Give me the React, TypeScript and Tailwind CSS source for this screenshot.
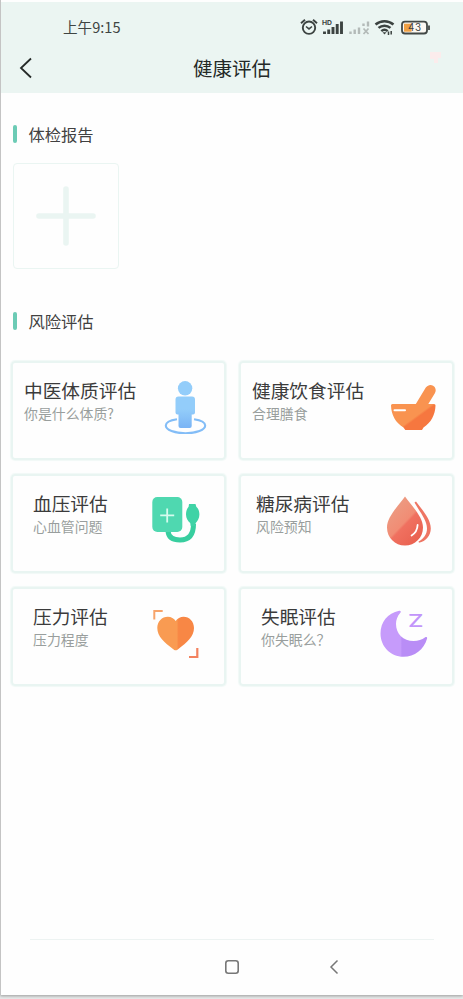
import type { ReactNode } from "react";

function PersonIcon() {
  return (
    <svg width="64" height="64" viewBox="0 0 64 64" fill="none">
      <defs>
        <linearGradient id="person" x1="0" y1="0" x2="0" y2="1">
          <stop offset="0.4" stopColor="#93cdfa" />
          <stop offset="1" stopColor="#7ab4f5" />
        </linearGradient>
      </defs>
      <path
        d="M28 49.2C21 50.2 16.8 52.6 16.8 55.6c0 4.4 8.8 7.700 19.7 7.700s19.7-3.300 19.7-7.700c0-3-4.200-5.400-11.200-6.400"
        stroke="#83bdf7"
        strokeWidth="2.1"
      />
      <circle cx="36.1" cy="18.3" r="7.2" fill="#93cdfa" />
      <path
        d="M29.500 26.500h13.500a3 3 0 0 1 3 3V42.500a2 2 0 0 1-2 2h-1.300v11.500a2 2 0 0 1-2 2h-9.200a2 2 0 0 1-2-2V44.500H28.500a2 2 0 0 1-2-2V29.500a3 3 0 0 1 3-3z"
        fill="url(#person)"
      />
    </svg>
  );
}

function BowlIcon() {
  return (
    <svg width="64" height="64" viewBox="0 0 64 64" fill="none">
      <defs>
        <linearGradient id="bowl" x1="0" y1="0" x2="1" y2="0.8">
          <stop offset="0.57" stopColor="#f99350" />
          <stop offset="0.62" stopColor="#f6773f" />
        </linearGradient>
      </defs>
      <path
        d="M38.500 34.500 48.800 17.600a5.300 5.300 0 0 1 9.200 5.400L51 34.500z"
        fill="#f99350"
      />
      <path
        d="M15.500 34H57a1.500 1.500 0 0 1 1.500 1.600C58.200 45 54 53 46.500 57.400L45 60H28.300L26.500 57.400C18.500 53 14.300 45 14 35.600A1.500 1.500 0 0 1 15.500 34z"
        fill="url(#bowl)"
      />
      <path d="M17.500 40.300H28" stroke="#fff" strokeWidth="2" strokeLinecap="round" />
    </svg>
  );
}

function PressureIcon() {
  return (
    <svg width="64" height="64" viewBox="0 0 64 64" fill="none">
      <path
        d="M19 48c.5 6 5 9 12 9 9.500 0 13.500-5.500 13.500-16"
        stroke="#38ce9f"
        strokeWidth="5"
      />
      <path
        d="M40 21h6.500l.8 2.700c2.200 1.800 3.100 4.700 3.100 7.800 0 4-2 6.500-3.700 8.500l-.5 3h-4.500l-.5-3c-2.200-2-4.200-4.500-4.200-8.500 0-3.100.9-6 2.600-7.800z"
        fill="#3fd3a6"
      />
      <rect x="3.300" y="14" width="30" height="35" rx="5" fill="#4fd8b0" />
      <path d="M18.200 25.500v14M11.200 32.300h14" stroke="#d6fbee" strokeWidth="1.800" />
    </svg>
  );
}

function DropIcon() {
  return (
    <svg width="64" height="64" viewBox="0 0 64 64" fill="none">
      <defs>
        <linearGradient id="drop" x1="0.150" y1="0.150" x2="0.800" y2="1">
          <stop offset="0" stopColor="#ec9c83" />
          <stop offset="0.470" stopColor="#f18c74" />
          <stop offset="0.520" stopColor="#f07160" />
          <stop offset="1" stopColor="#e9604f" />
        </linearGradient>
      </defs>
      <path
        d="M28 13.500c5.500 8 18 20 18 31 0 10.300-8 18-18 18s-18-7.700-18-18c0-11 12.500-23 18-31z"
        fill="url(#drop)"
      />
      <path d="M40.600 42c-.2 4.500-2 8-6 10.500" stroke="#fff" strokeWidth="1.800" strokeLinecap="round" />
      <path
        d="M37.500 19.500 39 18.500C45 26.500 53.800 36 53.800 45.500c0 7-5 12.800-11.800 14.300l-.5-1.300C46.500 56 50 51.500 50 45.500c0-8.500-7-16-12.500-26z"
        fill="#ee7563"
      />
    </svg>
  );
}

function HeartIcon() {
  return (
    <svg width="64" height="64" viewBox="0 0 64 64" fill="none">
      <defs>
        <linearGradient id="heart" x1="0" y1="0" x2="1" y2="0">
          <stop offset="0.530" stopColor="#f99b52" />
          <stop offset="0.580" stopColor="#f88745" />
        </linearGradient>
      </defs>
      <path
        d="M26.700 54.300c-1 0-1.800-.6-2.700-1.300C15.500 46.500 8.300 40.500 8.300 32c0-6.500 4.700-11.300 10.500-11.300 3.400 0 6.200 1.700 7.900 4.300 1.700-2.600 4.500-4.300 7.900-4.300C40.300 20.700 45 25.500 45 32c0 8.500-7.200 14.500-15.600 21-.9.700-1.700 1.300-2.700 1.300z"
        fill="url(#heart)"
      />
      <path d="M5.300 23.500V14.900H13.700" stroke="#f7a46b" strokeWidth="2" />
      <path d="M48.300 52v9H40" stroke="#f3825f" strokeWidth="2.200" />
    </svg>
  );
}

function MoonIcon() {
  return (
    <svg width="64" height="64" viewBox="0 0 64 64" fill="none">
      <defs>
        <linearGradient id="moon" x1="0" y1="0" x2="1" y2="0">
          <stop offset="0.430" stopColor="#c69bfb" />
          <stop offset="0.460" stopColor="#b98df6" />
        </linearGradient>
      </defs>
      <path
        d="M22.200 14.800C10.500 17 3.500 26.500 3.500 37.500c0 13 10 23.300 23 23.300 11 0 20.500-7.300 23.600-18.400.3-1.400-.8-1.900-1.900-1.200-3.400 2.500-7 3.800-11.500 3.800-10.500 0-17.700-7.200-17.700-17 0-4 1.300-8 4.400-11.300.9-1 .3-2.200-1.200-1.900z"
        fill="url(#moon)"
      />
      <text
        x="31"
        y="31.300"
        fontFamily="Inter, sans-serif"
        fontSize="17.500"
        fontWeight="500"
        textLength="15.500"
        lengthAdjust="spacingAndGlyphs"
        fill="#c295fa"
      >
        Z
      </text>
    </svg>
  );
}

function StatusIcons() {
  return (
    <svg width="136" height="24" viewBox="0 0 136 24" fill="none">
      {/* Alarm */}
      <g stroke="#3c4341" strokeWidth="1.900">
        <circle cx="12" cy="12.700" r="6.200" />
        <path d="M9 11.500 12 13.900l3-2.400" strokeWidth="1.600" />
        <path d="M4 8.300 8 4.800M20 8.300 16 4.800" />
      </g>
      {/* Signal */}
      <text x="25" y="9.700" fontFamily="Inter, sans-serif" fontSize="6.800" fontWeight="700" fill="#3c4341">
        HD
      </text>
      <path
        d="M27.500 19v-2.500M31.700 19v-4.500M36 19v-7M40.200 19V9M44.500 19V6.500"
        stroke="#3c4341"
        strokeWidth="2.900"
      />
      <path
        d="M53.500 19v-2.500M57.700 19v-4.500M62 19v-6.500M66.500 11V8.500M71 11.500V6.500"
        stroke="#b3bab8"
        strokeWidth="2.400"
      />
      <path d="m66.500 13.500 5 5.500m0-5.500-5 5.500" stroke="#b3bab8" strokeWidth="1.800" />
      {/* Wifi */}
      <g stroke="#3c4341" strokeWidth="2.500">
        <path d="M78.500 9.500c5.300-4.500 12.700-4.500 18 0" />
        <path d="M81.500 12.900c3.500-3 8.500-3 12 0" />
        <path d="M84.300 16.100c1.900-1.600 4.500-1.600 6.400 0" />
      </g>
      <path d="M85.500 17.200h4l-2 2.300z" fill="#3c4341" />
      <path d="M91.500 20v-3.500M94.200 16v3.500" stroke="#3c4341" strokeWidth="1.500" />
      {/* Battery */}
      <rect x="105" y="6.700" width="25" height="11.800" rx="3" fill="#fbf8f3" stroke="#424846" strokeWidth="1.800" />
      <path d="M107 8.700h7.500v8H107z" fill="#f0a043" />
      <path d="M132 10.500v4.500" stroke="#424846" strokeWidth="1.800" />
      <text x="117.800" y="16.200" textAnchor="middle" fontFamily="Inter, sans-serif" fontSize="9.800" letterSpacing="0.500" fill="#3c4341">
        43
      </text>
    </svg>
  );
}

function SectionTitle({ children }: { children: ReactNode }) {
  return (
    <div className="flex h-[18px] items-center gap-[11.500px] pl-3">
      <span className="h-[18px] w-1 rounded-sm bg-[#6ccbb5]" />
      <h2 className="text-[16.300px] leading-[18px] text-[#414141]">{children}</h2>
    </div>
  );
}

const cards = [
  { title: "中医体质评估", desc: "你是什么体质?", icon: <PersonIcon />, pad: "pl-[11px]" },
  { title: "健康饮食评估", desc: "合理膳食", icon: <BowlIcon />, pad: "pl-[11px]" },
  { title: "血压评估", desc: "心血管问题", icon: <PressureIcon />, pad: "pl-[20px]" },
  { title: "糖尿病评估", desc: "风险预知", icon: <DropIcon />, pad: "pl-[15px]" },
  { title: "压力评估", desc: "压力程度", icon: <HeartIcon />, pad: "pl-[20px]" },
  { title: "失眠评估", desc: "你失眠么？", icon: <MoonIcon />, pad: "pl-[20px]" },
];

export default function App() {
  return (
    <div className="h-[999px] w-[463px] overflow-hidden bg-[#e7eaea] font-['Noto_Sans_CJK_SC',sans-serif]">
      <div className="flex h-[995px] flex-col border-l border-[#c4c4c4] bg-[#fefefe] pt-[2px] shadow-[0_1px_3px_#9a9a9a]">
        <header className="h-[91px] bg-[#ebf5f2]">
          <div className="flex h-[50px] items-center justify-between pr-[30px] pl-[62px]">
            <span className="text-[14.600px] leading-5 text-[#3f4543]">上午9:15</span>
            <StatusIcons />
          </div>
          <div className="grid h-8 grid-cols-[1fr_auto_1fr] items-center">
            <svg className="ml-[18px]" width="14" height="22" viewBox="0 0 14 22" fill="none">
              <path d="M12 1.500 2 11l10 9.500" stroke="#252a28" strokeWidth="1.800" />
            </svg>
            <h1 className="text-[19.500px] leading-8 text-[#242927]">健康评估</h1>
            <svg className="mr-5 -mt-5 justify-self-end" width="14" height="16" viewBox="0 0 14 16">
              <path d="M1 2h11v6H9v5H5V9H1z" fill="#fbecec" />
            </svg>
          </div>
        </header>

        <main className="flex-1">
          <div className="pt-[32px]">
            <SectionTitle>体检报告</SectionTitle>
            <button className="mt-5 ml-3 flex h-[106px] w-[106px] items-center justify-center rounded border border-[#eaf5f2]">
              <svg width="60" height="60" viewBox="0 0 60 60">
                <path d="M30 3v54M3 30h54" stroke="#eaf5f2" strokeWidth="5.600" strokeLinecap="round" />
              </svg>
            </button>
          </div>

          <div className="pt-[43px]">
            <SectionTitle>风险评估</SectionTitle>
            <div className="mt-[31px] grid grid-cols-2 gap-x-[13px] gap-y-[14px] pr-[9px] pl-[10px]">
              {cards.map((card) => (
                <div
                  key={card.title}
                  className={`flex h-[99px] justify-between rounded border-2 border-[#e9f5f2] pr-[11px] shadow-[0_0_1px_1px_#f1f9f7] ${card.pad}`}
                >
                  <div className="pt-[14px]">
                    <h3 className="text-[18.700px] leading-[26px] whitespace-nowrap text-[#3b3b3b]">{card.title}</h3>
                    <p className="text-[13.900px] leading-[21px] whitespace-nowrap text-[#999e9d]">{card.desc}</p>
                  </div>
                  <div className="mt-[7px] w-16 shrink-0">{card.icon}</div>
                </div>
              ))}
            </div>
          </div>
        </main>

        <footer className="h-[56px]">
          <div className="mr-[29px] ml-[29px] h-px bg-[#edf3f2]" />
          <div className="flex h-[54px] items-center pl-[223px]">
            <svg width="16" height="16" viewBox="0 0 16 16" fill="none">
              <rect x="1.800" y="1.800" width="12.400" height="12.400" rx="2.500" stroke="#777" strokeWidth="1.600" />
            </svg>
            <svg className="ml-[88px]" width="12" height="16" viewBox="0 0 12 16" fill="none">
              <path d="M9.500 1.500 3 8l6.500 6.500" stroke="#777" strokeWidth="1.500" />
            </svg>
          </div>
        </footer>
      </div>
    </div>
  );
}
